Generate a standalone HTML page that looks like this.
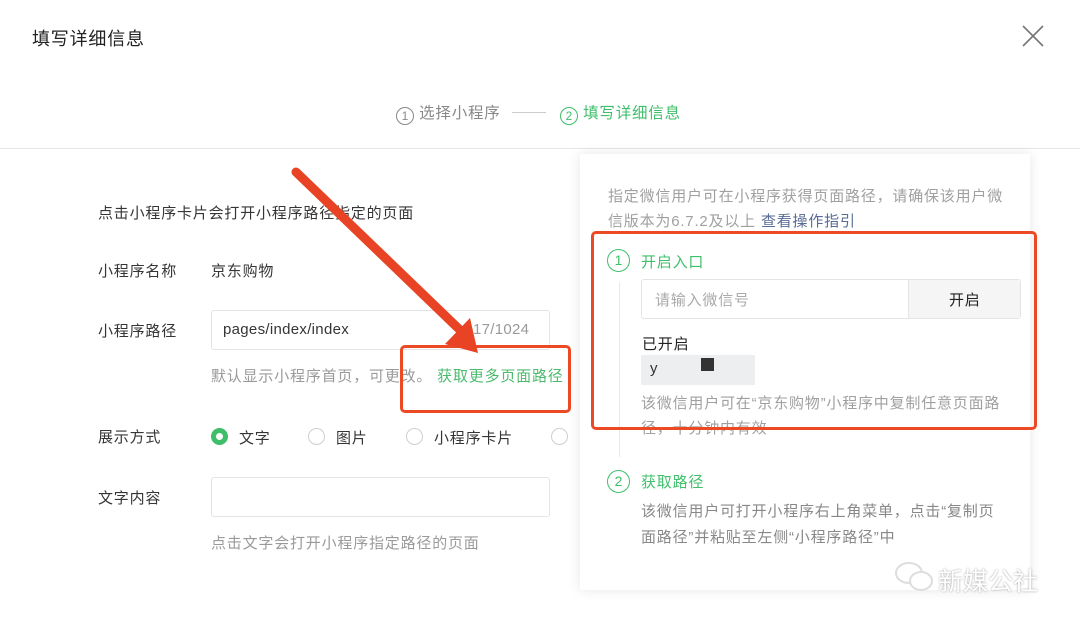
<!DOCTYPE html>
<html><head><meta charset="utf-8"><style>
*{margin:0;padding:0;box-sizing:border-box}
body{width:1080px;height:626px;background:#fff;position:relative;overflow:hidden;font-family:"Liberation Sans","Noto Sans CJK SC",sans-serif;color:#353535;font-size:15px;letter-spacing:.8px}
.a{position:absolute;white-space:nowrap}
.g{color:#9a9a9a}
.inp{position:absolute;border:1px solid #e4e4e4;border-radius:3px;background:#fff}
.rad{position:absolute;width:17px;height:17px;border:1px solid #cfcfcf;border-radius:50%}
.num{position:absolute;width:23px;height:23px;border:1.5px solid #3fbf6a;border-radius:50%;color:#3fbf6a;font-size:14px;text-align:center;line-height:20px;letter-spacing:0}
</style></head><body>
<div class="a" style="left:32px;top:25px;font-size:18px;color:#222">填写详细信息</div>
<svg class="a" style="left:1022px;top:25px" width="22" height="22"><path d="M1 1L21 21M21 1L1 21" stroke="#777" stroke-width="1.6"/></svg>
<div class="a g" style="left:396px;top:101px;font-size:15.5px;color:#888"><span style="display:inline-block;width:18px;height:18px;border:1px solid #888;border-radius:50%;text-align:center;line-height:16px;font-size:12px;vertical-align:-2px;letter-spacing:0">1</span> 选择小程序</div>
<div class="a" style="left:512px;top:112px;width:34px;height:1px;background:#ccc"></div>
<div class="a" style="left:560px;top:101px;color:#3fbf6a;font-size:15.5px"><span style="display:inline-block;width:18px;height:18px;border:1px solid #3fbf6a;border-radius:50%;text-align:center;line-height:16px;font-size:12px;vertical-align:-2px;letter-spacing:0">2</span> 填写详细信息</div>
<div class="a" style="left:0;top:148px;width:1080px;height:1px;background:#e6e6e6"></div>

<div class="a" style="left:98px;top:202px">点击小程序卡片会打开小程序路径指定的页面</div>
<div class="a" style="left:98px;top:260px">小程序名称</div>
<div class="a" style="left:211px;top:260px">京东购物</div>
<div class="a" style="left:98px;top:320px">小程序路径</div>
<div class="inp" style="left:211px;top:310px;width:339px;height:40px"></div>
<div class="a" style="left:223px;top:321px;letter-spacing:.3px">pages/index/index</div>
<div class="a g" style="left:473px;top:321px;letter-spacing:.3px">17/1024</div>
<div class="a g" style="left:211px;top:365px">默认显示小程序首页，可更改。 <span style="color:#4cba6e">获取更多页面路径</span></div>
<div class="a" style="left:98px;top:426px">展示方式</div>
<div class="rad" style="left:211px;top:428px;border:5px solid #3fbf6a"></div>
<div class="a" style="left:239px;top:427px">文字</div>
<div class="rad" style="left:308px;top:428px"></div>
<div class="a" style="left:336px;top:427px">图片</div>
<div class="rad" style="left:406px;top:428px"></div>
<div class="a" style="left:434px;top:427px">小程序卡片</div>
<div class="rad" style="left:551px;top:428px"></div>
<div class="a" style="left:98px;top:487px">文字内容</div>
<div class="inp" style="left:211px;top:477px;width:339px;height:40px"></div>
<div class="a g" style="left:211px;top:532px">点击文字会打开小程序指定路径的页面</div>

<div class="a" style="left:580px;top:154px;width:450px;height:436px;background:#fff;box-shadow:0 0 12px rgba(0,0,0,.1)"></div>
<div class="a g" style="left:608px;top:184px;line-height:25px;color:#a0a0a0">指定微信用户可在小程序获得页面路径，请确保该用户微<br>信版本为6.7.2及以上 <span style="color:#576b95">查看操作指引</span></div>
<div class="num" style="left:607px;top:249px">1</div>
<div class="a" style="left:641px;top:251px;color:#3fbf6a">开启入口</div>
<div class="a" style="left:619px;top:282px;width:1px;height:175px;background:#e8e8e8"></div>
<div class="inp" style="left:641px;top:279px;width:380px;height:40px"></div>
<div class="a" style="left:908px;top:280px;width:112px;height:38px;background:#f5f5f5;border-left:1px solid #e4e4e4"></div>
<div class="a" style="left:949px;top:289px;color:#222">开启</div>
<div class="a g" style="left:655px;top:289px;color:#aaa">请输入微信号</div>
<div class="a" style="left:642px;top:333px;color:#222">已开启</div>
<div class="a" style="left:641px;top:355px;width:114px;height:30px;background:#eceef0"></div>
<div class="a" style="left:650px;top:360px;color:#333">y</div>
<div class="a" style="left:701px;top:358px;width:13px;height:13px;background:#333"></div>
<div class="a g" style="left:641px;top:391px;line-height:25px;color:#a0a0a0">该微信用户可在“京东购物”小程序中复制任意页面路<br>径，十分钟内有效</div>
<div class="num" style="left:607px;top:470px">2</div>
<div class="a" style="left:641px;top:471px;color:#3fbf6a">获取路径</div>
<div class="a g" style="left:641px;top:499px;line-height:26px;color:#888">该微信用户可打开小程序右上角菜单，点击“复制页<br>面路径”并粘贴至左侧“小程序路径”中</div>

<div class="a" style="left:591px;top:231px;width:446px;height:199px;border:3px solid #ec4a25;border-radius:5px"></div>
<div class="a" style="left:400px;top:345px;width:171px;height:68px;border:3px solid #ec4a25;border-radius:5px"></div>
<svg class="a" style="left:0;top:0" width="1080" height="626"><path d="M296 172L460 330" stroke="#e84324" stroke-width="9" stroke-linecap="round"/><polygon points="445,344 478,353 470,318" fill="#e84324"/></svg>

<svg class="a" style="left:893px;top:561px" width="44" height="34"><ellipse cx="16" cy="12" rx="13" ry="10" fill="none" stroke="#ddd" stroke-width="2"/><ellipse cx="28" cy="20" rx="11" ry="9" fill="#fff" stroke="#ddd" stroke-width="2"/></svg>
<div class="a" style="left:938px;top:562px;font-size:25px;color:#fff;text-shadow:0 0 2px #999;letter-spacing:0">新媒公社</div>
</body></html>
